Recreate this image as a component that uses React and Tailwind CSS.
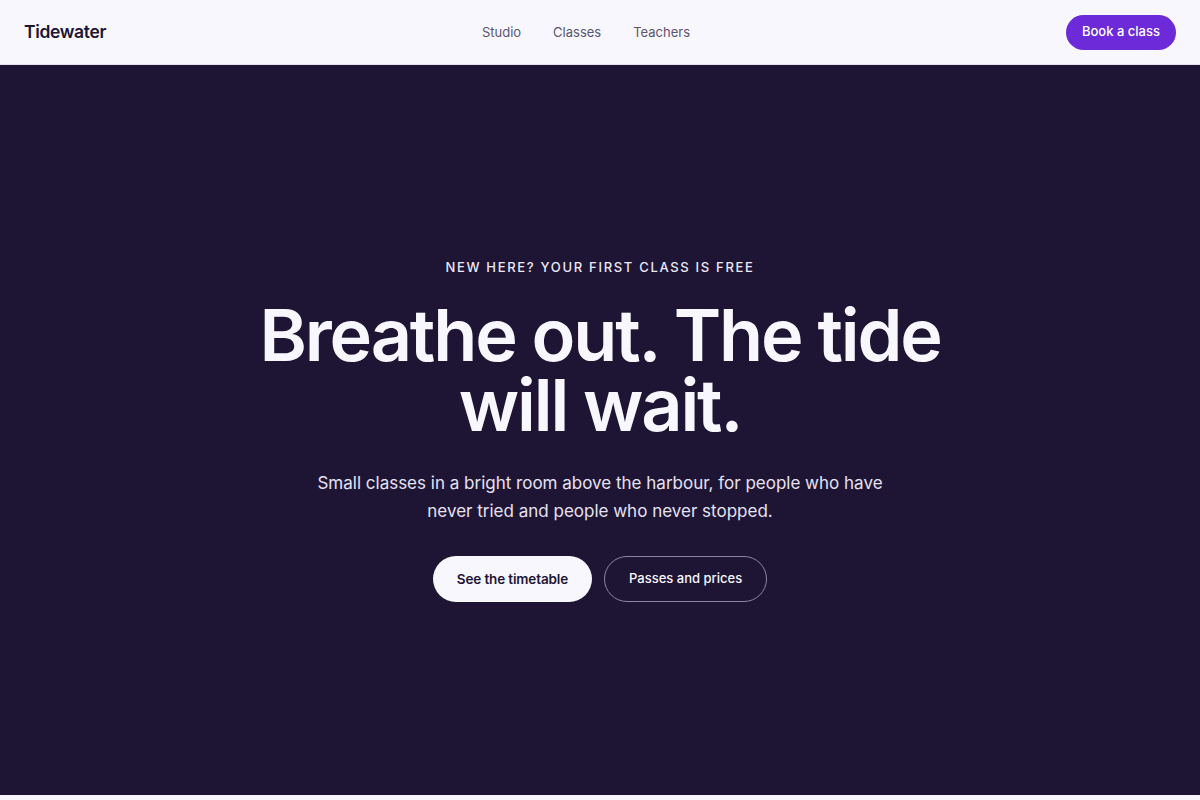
import React from 'react';

const navLinks = ['Studio', 'Classes', 'Teachers'];

const App = () => {
  return (
    <div className="min-h-screen bg-[#f8f7fd]" style={{ fontFamily: 'Inter, "Noto Sans", sans-serif' }}>
      {/* Header */}
      <header className="h-[65px] bg-[#f8f7fd] border-b border-[#e4e0f0] px-6 flex items-center justify-between">
        <div className="text-[17.5px] font-semibold tracking-[-0.02em] text-[#1e1535]">Tidewater</div>
        <nav className="flex items-center gap-8 pt-[2px] text-[13px] text-[#5b5570]">
          {navLinks.map(link => (
            <a key={link} href="#" className="hover:text-[#1e1535]">{link}</a>
          ))}
        </nav>
        <button className="h-[35px] px-4 rounded-full bg-[#6d2ad8] text-white text-[13px] font-medium">
          Book a class
        </button>
      </header>

      {/* Hero */}
      <section className="h-[730px] bg-[#1e1535] flex flex-col items-center justify-center text-center px-6">
        <p className="text-[13px] font-medium tracking-[0.13em] uppercase text-[#ece9f6]">
          New here? Your first class is free
        </p>
        <h1 className="mt-[22px] max-w-[720px] text-[72px] leading-[70px] font-semibold tracking-[-0.03em] text-[#f8f7fd]">
          Breathe out. The tide will wait.
        </h1>
        <p className="mt-[29px] max-w-[580px] text-[17px] leading-[28px] text-[#e6e2f1]">
          Small classes in a bright room above the harbour, for people who have never tried and people who never stopped.
        </p>
        <div className="mt-[31px] flex items-center gap-3">
          <button className="h-[46px] px-6 rounded-full bg-[#f8f7fd] text-[#1e1535] text-[13.5px] font-semibold tracking-[-0.01em]">
            See the timetable
          </button>
          <button className="h-[46px] px-6 rounded-full border border-[#8c86a0] text-[#f8f7fd] text-[13px] font-medium">
            Passes and prices
          </button>
        </div>
      </section>
    </div>
  );
};

export default App;
